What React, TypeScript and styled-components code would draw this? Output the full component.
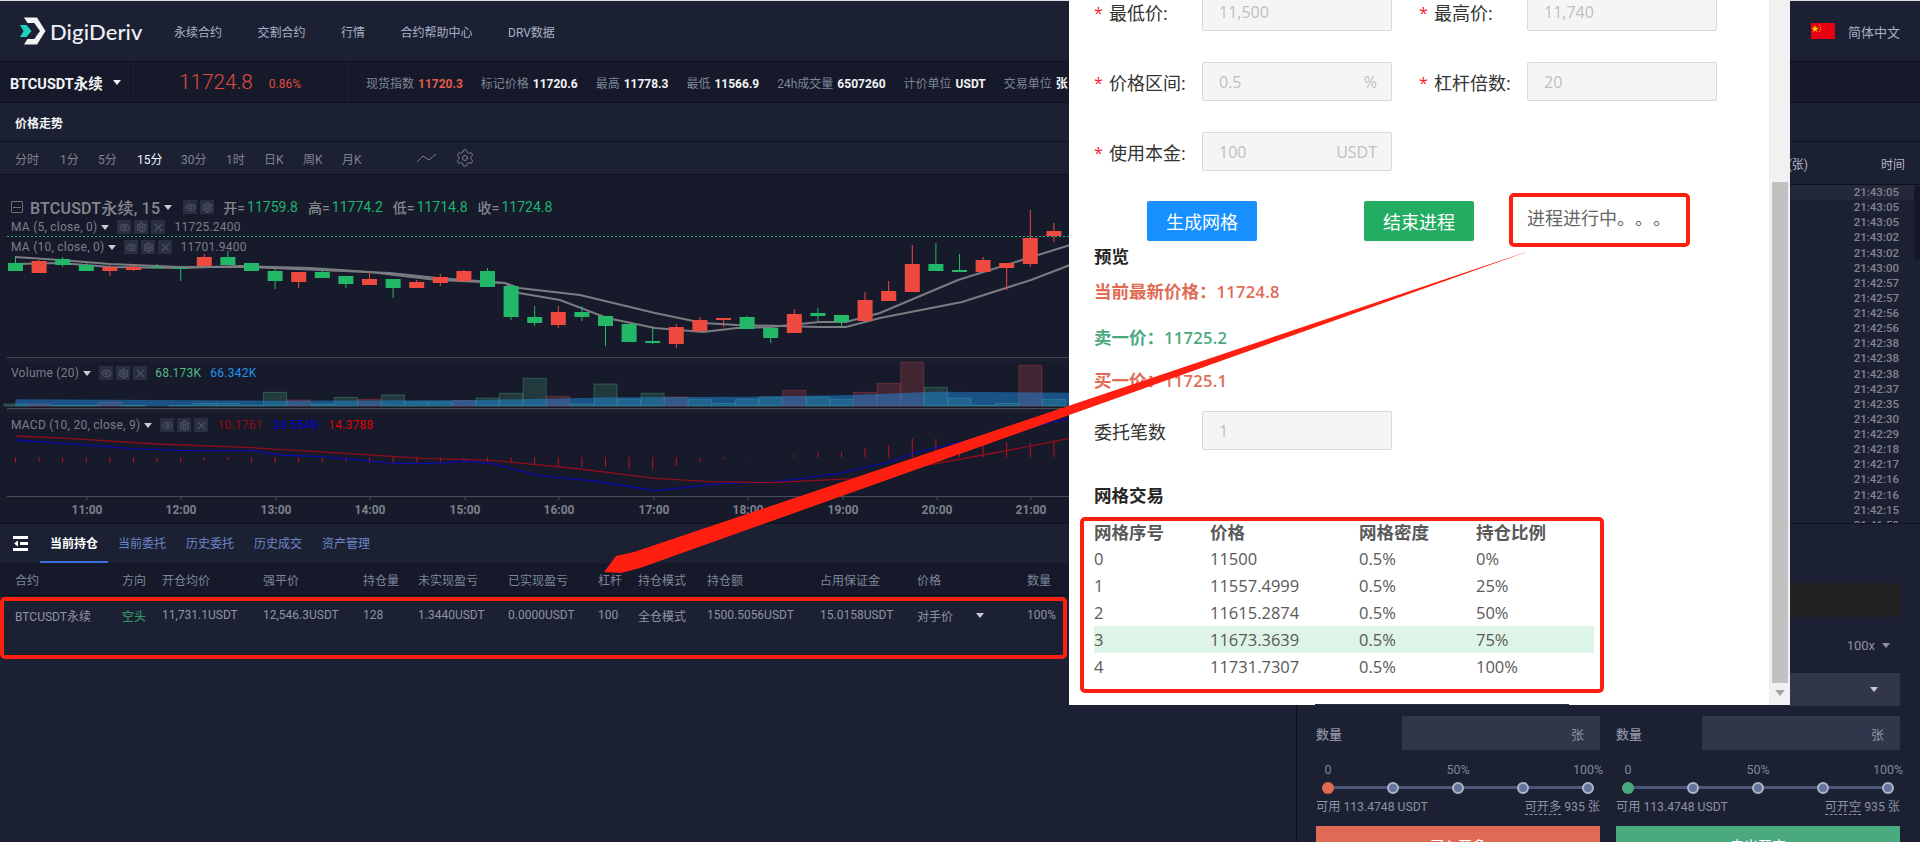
import React from "react";
import styled, { createGlobalStyle } from "styled-components";
import { Eye, Settings, X } from "lucide-react";

const SANS = `"Roboto", "Noto Sans CJK SC", sans-serif`;
const MODAL = `"Open Sans", "Noto Sans CJK SC", sans-serif`;

const Global = createGlobalStyle`
  html, body { margin: 0; padding: 0; background: #1c2033; }
  * { box-sizing: border-box; text-spacing-trim: space-all; }
  #root { width: 1920px; height: 842px; overflow: hidden; }
`;

const Page = styled.div`
  position: relative;
  width: 1920px;
  height: 842px;
  overflow: hidden;
  background: #1c2033;
  font-family: ${SANS};
  font-size: 12px;
  color: #8d92a4;
  display: flex;
  flex-direction: column;
`;

/* ---------- header ---------- */
const Header = styled.header`
  height: 61px;
  flex: none;
  border-top: 1px solid #dcdde0;
  display: flex;
  align-items: center;
  padding: 0 20px;
  background: #1c2033;
`;
const LogoWrap = styled.div`
  display: flex;
  align-items: center;
  gap: 4px;
  width: 154px;
  flex: none;
`;
const LogoText = styled.span`
  font-family: "Lato", sans-serif;
  font-size: 22px;
  font-weight: 500;
  letter-spacing: 0.1px;
  color: #eef0f4;
`;
const Nav = styled.nav`
  display: flex;
  gap: 35.5px;
  flex: 1;
  padding-top: 1px;
`;
const NavItem = styled.span`
  color: #a8b0c6;
  font-size: 12px;
`;
const Lang = styled.div`
  display: flex;
  align-items: center;
  gap: 13px;
  color: #a8b0c6;
  font-size: 13px;
`;

/* ---------- ticker ---------- */
const Ticker = styled.div`
  height: 42px;
  flex: none;
  display: flex;
  align-items: stretch;
  background: #151929;
  border-top: 1px solid #10131f;
  border-bottom: 1px solid #0e111c;
`;
const Symbol = styled.div`
  width: 134px;
  flex: none;
  display: flex;
  align-items: center;
  gap: 10px;
  padding-left: 10px;
  font-size: 14.5px;
  font-weight: 700;
  color: #f2f3f6;
  border-right: 1px solid #1d2134;
`;
const PriceCell = styled.div`
  width: 214px;
  flex: none;
  display: flex;
  align-items: center;
  gap: 16px;
  padding-left: 45px;
  color: #e14b3f;
  border-right: 1px solid #1d2134;
`;
const BigPrice = styled.span`
  font-size: 20.7px;
  font-weight: 300;
`;
const Change = styled.span`
  font-size: 12px;
  padding-top: 4px;
`;
const Stats = styled.div`
  display: flex;
  align-items: center;
  gap: 18px;
  padding-left: 18px;
  white-space: nowrap;
`;
const Stat = styled.span`
  color: #7f8698;
`;
const StatValue = styled.b<{ $red?: boolean }>`
  margin-left: 4px;
  color: ${(p) => (p.$red ? "#e0594c" : "#f2f3f6")};
  font-weight: 700;
`;

/* ---------- body ---------- */
const Body = styled.div`
  flex: 1;
  display: grid;
  grid-template-columns: 1296px 624px;
  min-height: 0;
`;
const Column = styled.div`
  display: flex;
  flex-direction: column;
  min-height: 0;
`;
const TitleBar = styled.div`
  height: 39px;
  flex: none;
  display: flex;
  align-items: center;
  padding-left: 15px;
  font-weight: 700;
  color: #f2f3f6;
  border-bottom: 1px solid #0e111c;
`;
const TimeBar = styled.div`
  height: 33px;
  flex: none;
  display: flex;
  align-items: center;
  padding-left: 15px;
  border-bottom: 1px solid #0e111c;
`;
const TimeTab = styled.span<{ $on?: boolean; $w: number }>`
  width: ${(p) => p.$w}px;
  flex: none;
  color: ${(p) => (p.$on ? "#f2f3f6" : "#80828c")};
`;
const Tools = styled.div`
  display: flex;
  align-items: center;
  gap: 18px;
  margin-left: 36px;
  color: #7f818b;
`;

/* ---------- chart ---------- */
const ChartArea = styled.div`
  height: 348px;
  flex: none;
  display: flex;
  flex-direction: column;
  background: #161a2b;
`;
const Pane = styled.div<{ $h: number }>`
  position: relative;
  height: ${(p) => p.$h}px;
  flex: none;
`;
const Drawing = styled.svg`
  display: block;
  width: 100%;
  height: 100%;
`;
const Legend = styled.div<{ $top: number }>`
  position: absolute;
  left: 11px;
  top: ${(p) => p.$top}px;
  display: flex;
  flex-direction: column;
`;
const LegendRow = styled.div`
  height: 20px;
  display: flex;
  align-items: center;
  color: #7d7f88;
  font-size: 12px;
  letter-spacing: 0.25px;
  white-space: nowrap;
`;
const LegendMain = styled(LegendRow)`
  font-size: 16px;
  letter-spacing: 0.2px;
  font-weight: 500;
  color: #85878f;
`;
const Collapse = styled.span`
  width: 12px;
  height: 12px;
  border: 1px solid #6f717a;
  border-radius: 1px;
  margin-right: 7px;
  display: flex;
  align-items: center;
  justify-content: center;
  &::after { content: ""; width: 8px; height: 1px; background: #6f717a; }
`;
const Caret = styled.span<{ $c?: string; $ml?: number }>`
  width: 0;
  height: 0;
  flex: none;
  border-left: 4px solid transparent;
  border-right: 4px solid transparent;
  border-top: 5px solid ${(p) => p.$c ?? "#c8cad0"};
  margin-left: ${(p) => p.$ml ?? 4}px;
`;
const IconGroup = styled.span<{ $ml: number; $mr: number }>`
  display: flex;
  gap: 3px;
  margin-left: ${(p) => p.$ml}px;
  margin-right: ${(p) => p.$mr}px;
`;
const IconBox = styled.span`
  width: 14px;
  height: 14px;
  display: flex;
  align-items: center;
  justify-content: center;
  background: #2a2f40;
  color: #4e5362;
`;
const Label = styled.span`
  font-size: 14px;
  letter-spacing: 0;
  margin-right: 2px;
`;
const Value = styled.span<{ $c: string; $mr?: number }>`
  color: ${(p) => p.$c};
  margin-right: ${(p) => p.$mr ?? 10}px;
  font-weight: 400;
`;
const MainValue = styled(Value)`
  font-size: 14px;
  letter-spacing: 0;
`;

/* ---------- positions ---------- */
const Tabs = styled.div`
  height: 40px;
  flex: none;
  display: flex;
  align-items: center;
  padding-left: 13px;
  border-top: 1px solid #0e111c;
`;
const Tab = styled.span<{ $on?: boolean }>`
  position: relative;
  height: 39px;
  display: flex;
  align-items: center;
  width: 68px;
  padding-left: 10px;
  color: ${(p) => (p.$on ? "#ffffff" : "#6d86c8")};
  font-weight: ${(p) => (p.$on ? 700 : 400)};
  border-bottom: 2px solid ${(p) => (p.$on ? "#3b6fdc" : "transparent")};
`;
const TabIcon = styled.span`
  width: 27px;
  flex: none;
  display: flex;
  color: #fff;
`;
const grid = `15px 107px 40px 101px 100px 55px 90px 90px 40px 69px 113px 97px 110px 60px`;
const PosHead = styled.div`
  height: 33px;
  flex: none;
  display: grid;
  grid-template-columns: ${grid};
  align-items: center;
  background: #151929;
  border-bottom: 1px solid #0e111c;
  color: #7f8698;
`;
const PosRow = styled.div`
  height: 38px;
  flex: none;
  display: grid;
  grid-template-columns: ${grid};
  align-items: center;
  color: #8f94a4;
`;
const Short = styled.span`
  color: #35a96f;
`;
const PriceType = styled.span`
  display: flex;
  align-items: center;
  gap: 23px;
`;

/* ---------- trades ---------- */
const TradeHead = styled.div`
  height: 43px;
  flex: none;
  display: flex;
  justify-content: flex-end;
  align-items: center;
  gap: 73px;
  padding-right: 15px;
  color: #b4b8c4;
  border-bottom: 1px solid #0e111c;
`;
const TradeList = styled.div`
  position: relative;
  height: 338px;
  flex: none;
  overflow: hidden;
`;
const TradeRow = styled.div<{ $on?: boolean }>`
  height: 15.13px;
  line-height: 15px;
  padding-right: 15px;
  margin-right: 6px;
  text-align: right;
  color: #82848e;
  font-weight: 500;
  font-size: 11.5px;
  background: ${(p) => (p.$on ? "#24283b" : "transparent")};
`;
const ListThumb = styled.span`
  position: absolute;
  right: 0;
  top: 1px;
  width: 6px;
  height: 74px;
  border-radius: 3px;
  background: #141728;
`;

/* ---------- order form ---------- */
const FormPanel = styled.div`
  flex: 1;
  min-height: 0;
  border-left: 1px solid #0e111c;
  border-top: 1px solid #0e111c;
  padding: 59px 20px 0 19px;
  display: flex;
  flex-direction: column;
  overflow: hidden;
`;
const WideField = styled.div<{ $bg: string; $h: number }>`
  width: 110px;
  height: ${(p) => p.$h}px;
  flex: none;
  align-self: flex-end;
  background: ${(p) => p.$bg};
  display: flex;
  align-items: center;
  justify-content: flex-end;
  padding-right: 22px;
`;
const LeverRow = styled.div`
  height: 56px;
  flex: none;
  display: flex;
  align-items: center;
  justify-content: flex-end;
  gap: 7px;
  padding-right: 10px;
  font-size: 13px;
  color: #8d92a4;
`;
const Sides = styled.div`
  display: grid;
  grid-template-columns: 284px 284px;
  gap: 16px;
  margin-top: 10px;
`;
const Side = styled.div`
  display: flex;
  flex-direction: column;
`;
const QtyRow = styled.div`
  height: 34px;
  display: flex;
  align-items: center;
  justify-content: space-between;
  font-weight: 500;
  font-size: 13px;
  color: #8d92a4;
`;
const QtyInput = styled.div`
  width: 198px;
  height: 34px;
  background: #32364a;
  display: flex;
  align-items: center;
  justify-content: flex-end;
  padding-right: 16px;
  font-weight: 400;
`;
const Scale = styled.div`
  height: 15px;
  margin-top: 12px;
  display: flex;
  width: 288px;
  color: #7f8698;
  font-size: 12.5px;
  line-height: 15px;
`;
const ScaleMark = styled.span<{ $w: number; $ml: number }>`
  width: ${(p) => p.$w}px;
  margin-left: ${(p) => p.$ml}px;
  flex: none;
  text-align: center;
`;
const Track = styled.div`
  position: relative;
  height: 12px;
  margin: 5px 12px 0 12px;
  display: flex;
  align-items: center;
  justify-content: space-between;
  &::before {
    content: "";
    position: absolute;
    left: 0;
    right: 0;
    top: 4px;
    height: 3px;
    background: #4d5878;
  }
`;
const Dot = styled.span<{ $c?: string }>`
  position: relative;
  width: 12px;
  height: 12px;
  border-radius: 50%;
  margin: 0 -6px;
  background: ${(p) => p.$c ?? "#66739c"};
  border: ${(p) => (p.$c ? "none" : "2px solid #aeb6cb")};
`;
const Info = styled.div`
  margin-top: 5px;
  height: 16px;
  line-height: 16px;
  font-size: 12.2px;
  display: flex;
  justify-content: space-between;
  color: #8d92a4;
`;
const Dashed = styled.span`
  border-bottom: 1px dashed #8d92a4;
`;
const Action = styled.div<{ $c: string }>`
  margin-top: 11px;
  height: 38px;
  background: ${(p) => p.$c};
  color: #fff;
  font-size: 14px;
  display: flex;
  align-items: center;
  justify-content: center;
`;

/* ---------- modal ---------- */
const Modal = styled.div`
  position: absolute;
  left: 1069px;
  top: 0;
  width: 721px;
  height: 705px;
  background: #fff;
  overflow: hidden;
  font-family: ${MODAL};
  color: #333;
  display: flex;
`;
const ModalBody = styled.div`
  flex: 1;
  padding: 0 0 0 25px;
  margin-top: -8px;
`;
const FormRow = styled.div`
  height: 39px;
  margin-bottom: 31px;
  display: flex;
`;
const FormField = styled.div`
  width: 325px;
  flex: none;
  display: flex;
  align-items: center;
`;
const Star = styled.span`
  width: 15px;
  flex: none;
  color: #f5222d;
  font-size: 16px;
  padding-top: 3px;
`;
const FieldLabel = styled.span`
  width: 93px;
  flex: none;
  font-size: 18px;
  color: #333;
`;
const PlainLabel = styled(FieldLabel)`
  width: 108px;
`;
const Box = styled.div`
  width: 190px;
  height: 39px;
  flex: none;
  display: flex;
  align-items: center;
  justify-content: space-between;
  padding: 0 14px 0 16px;
  background: #f5f5f5;
  border: 1px solid #d9d9d9;
  border-radius: 2px;
  color: #bfbfbf;
  font-size: 16px;
`;
const Buttons = styled.div`
  display: flex;
  align-items: center;
  margin-top: -1px;
  padding-left: 53px;
  height: 40px;
`;
const Btn = styled.div<{ $c: string }>`
  width: 110px;
  height: 40px;
  flex: none;
  display: flex;
  align-items: center;
  justify-content: center;
  border-radius: 2px;
  background: ${(p) => p.$c};
  color: #fff;
  font-size: 18px;
  box-shadow: 0 2px 0 rgba(0, 0, 0, 0.03);
  margin-right: 107px;
`;
const Running = styled.span`
  font-size: 18px;
  color: #666;
  white-space: nowrap;
  margin: -8px 0 0 -54px;
`;
const Heading = styled.div<{ $mt: number }>`
  margin-top: ${(p) => p.$mt}px;
  font-size: 17.5px;
  line-height: 26px;
  font-weight: 700;
  color: #262626;
`;
const Quote = styled.div<{ $c: string; $mt: number }>`
  margin-top: ${(p) => p.$mt}px;
  font-size: 17.5px;
  line-height: 24px;
  font-weight: 700;
  color: ${(p) => p.$c};
`;
const QuoteNum = styled.span`
  font-size: 16.5px;
  font-weight: 600;
  letter-spacing: 0.3px;
`;
const OrderCount = styled.div`
  display: flex;
  align-items: center;
  margin-top: 18px;
`;
const GridTable = styled.div`
  margin-top: 10px;
  width: 500px;
  display: flex;
  flex-direction: column;
`;
const GridRow = styled.div<{ $on?: boolean; $head?: boolean }>`
  height: 27px;
  display: grid;
  grid-template-columns: 116px 149px 117px 118px;
  align-items: center;
  color: #595959;
  font-size: ${(p) => (p.$head ? 17.5 : 16.5)}px;
  font-weight: ${(p) => (p.$head ? 700 : 400)};
  background: ${(p) => (p.$on ? "#def4e7" : "transparent")};
`;
const ScrollTrack = styled.div`
  position: relative;
  width: 21px;
  flex: none;
  height: 705px;
  background: #f1f1f1;
  border-left: 1px solid #eee;
`;
const ScrollThumb = styled.div`
  position: absolute;
  left: 2px;
  right: 2px;
  top: 182px;
  height: 501px;
  background: #c1c1c1;
`;
const ScrollArrow = styled.span`
  position: absolute;
  left: 5px;
  bottom: 9px;
  width: 0;
  height: 0;
  border-left: 5px solid transparent;
  border-right: 5px solid transparent;
  border-top: 6px solid #a3a3a3;
`;
const ModalFoot = styled.span`
  position: absolute;
  left: 246px;
  bottom: 0;
  width: 254px;
  height: 1px;
  background: #2a2d3a;
`;

/* ---------- annotations over the screenshot ---------- */
const RedBox = styled.div<{ $x: number; $y: number; $w: number; $h: number }>`
  position: absolute;
  left: ${(p) => p.$x}px;
  top: ${(p) => p.$y}px;
  width: ${(p) => p.$w}px;
  height: ${(p) => p.$h}px;
  border: 4px solid #ff1f10;
  border-radius: 5px;
`;
const ArrowLayer = styled.svg`
  position: absolute;
  left: 0;
  top: 0;
  width: 1920px;
  height: 842px;
  pointer-events: none;
`;

/* ---------- data ---------- */
type C = [number, number, number, number, number];
// body-top, body-bottom, wick-top, wick-bottom, 1 = red
const candles: C[] = [
  [263, 271, 256, 271, 0], [261, 273, 260, 273, 1], [259, 265, 257, 267, 0], [265, 271, 263, 271, 0],
  [267, 271, 265, 276, 1], [267, 270, 264, 271, 1], [267, 268, 264, 268, 0], [268, 269, 267, 281, 0],
  [257, 266, 254, 266, 1], [257, 265, 251, 265, 0], [263, 271, 263, 271, 0], [271, 281, 269, 289, 0],
  [272, 282, 272, 288, 1], [272, 278, 268, 278, 0], [276, 284, 276, 288, 0], [279, 285, 271, 285, 1],
  [279, 288, 279, 298, 0], [282, 288, 280, 288, 1], [277, 283, 274, 286, 1], [271, 281, 270, 281, 1],
  [271, 287, 268, 287, 0], [286, 317, 286, 320, 0], [317, 323, 306, 326, 0], [312, 325, 306, 328, 1],
  [312, 317, 306, 321, 0], [316, 326, 316, 346, 0], [324, 342, 324, 342, 0], [341, 343, 328, 344, 0],
  [327, 344, 324, 348, 1], [320, 331, 317, 332, 1], [318, 320, 318, 327, 1], [317, 329, 316, 329, 0],
  [328, 338, 328, 343, 0], [314, 333, 309, 333, 1], [313, 316, 308, 321, 0], [315, 322, 315, 327, 0],
  [300, 321, 292, 321, 1], [291, 301, 281, 301, 1], [264, 292, 245, 292, 1], [264, 271, 243, 271, 0],
  [270, 272, 254, 272, 0], [260, 272, 257, 272, 1], [263, 268, 263, 290, 1], [238, 264, 210, 267, 1],
  [231, 236, 223, 242, 1], [222, 240, 214, 244, 1], [226, 250, 220, 256, 0], [240, 262, 232, 268, 0],
];
const cx = (i: number) => 15.5 + 23.6 * i;

const maFast = "15,264 60,263 110,267 181,268 240,266 310,268 370,272 437,280 505,283 519,293 560,300 607,318 655,328 703,332 737,328 771,327 819,322 846,322 880,313 958,280 1070,245 1300,190";
const maSlow = "15,257 60,260 110,264 180,267 250,267 320,270 390,273 437,278 505,283 519,288 580,295 655,313 703,323 737,325 819,327 846,327 880,318 962,302 1031,280 1070,265 1300,210";

const volTops = [372, 372, 376, 376, 366, 376, 380, 376, 370, 370, 376, 337, 360, 372, 352, 358, 345, 366, 366, 362, 354, 340, 295, 349, 372, 312, 358, 340, 351, 358, 370, 358, 351, 331, 351, 358, 337, 310, 247, 322, 354, 376, 370, 256, 358];
const volRed = new Set([1, 4, 12, 15, 19, 23, 28, 33, 36, 37, 38, 43]);
const volY = (v: number) => 280 + v / 3;
const volArea: [number, number][] = [[23, 358], [400, 362], [700, 360], [900, 352], [1100, 350], [1250, 345], [1370, 335], [1567, 338], [1900, 338]];

const macdSignal: [number, number][] = [[23, 468], [100, 475], [230, 492], [370, 503], [480, 517], [620, 535], [720, 541], [850, 567], [960, 595], [1040, 605], [1130, 608], [1250, 596], [1400, 540], [1480, 510], [1567, 475], [1900, 400]];
const macdLine: [number, number][] = [[23, 480], [110, 493], [190, 505], [270, 512], [370, 512], [410, 525], [470, 530], [580, 550], [640, 550], [680, 543], [720, 550], [790, 587], [870, 603], [960, 632], [1060, 610], [1130, 607], [1230, 580], [1300, 548], [1340, 518], [1410, 485], [1480, 455], [1567, 415], [1900, 340]];
const macdTicks = [14, 12, 14, 15, 17, 15, 13, 14, 10, 8, 13, 17, 14, 14, 14, 16, 17, 17, 14, 13, 13, 15, 22, 28, 28, 28, 34, 35, 27, 13, 5, 2, 1, -8, -15, -15, -28, -36, -57, -56, -45, -48, -45, -44, -50];
const zoomPts = (pts: [number, number][]) => pts.map(([x, v]) => `${(x / 1.465).toFixed(1)},${volY(v).toFixed(1)}`).join(" ");

const hours = [[87, "11:00"], [181, "12:00"], [276, "13:00"], [370, "14:00"], [465, "15:00"], [559, "16:00"], [654, "17:00"], [748, "18:00"], [843, "19:00"], [937, "20:00"], [1031, "21:00"]] as const;
const times = ["21:43:05", "21:43:05", "21:43:05", "21:43:02", "21:43:02", "21:43:00", "21:42:57", "21:42:57", "21:42:56", "21:42:56", "21:42:38", "21:42:38", "21:42:38", "21:42:37", "21:42:35", "21:42:30", "21:42:29", "21:42:18", "21:42:17", "21:42:16", "21:42:16", "21:42:15", "21:41:59"];
const headers = ["合约", "方向", "开仓均价", "强平价", "持仓量", "未实现盈亏", "已实现盈亏", "杠杆", "持仓模式", "持仓额", "占用保证金", "价格", "数量"];
const gridRows = [["0", "11500", "0.5%", "0%"], ["1", "11557.4999", "0.5%", "25%"], ["2", "11615.2874", "0.5%", "50%"], ["3", "11673.3639", "0.5%", "75%"], ["4", "11731.7307", "0.5%", "100%"]];
const tf: [string, number, boolean?][] = [["分时", 45], ["1分", 38], ["5分", 39], ["15分", 44, true], ["30分", 45], ["1时", 38], ["日K", 39], ["周K", 39], ["月K", 39]];

const Icons = ({ ml, mr }: { ml: number; mr: number }) => (
  <IconGroup $ml={ml} $mr={mr}>
    <IconBox><Eye size={11} strokeWidth={2.4} /></IconBox>
    <IconBox><Settings size={11} strokeWidth={2.6} /></IconBox>
    <IconBox><X size={13} strokeWidth={2} /></IconBox>
  </IconGroup>
);

const Logo = () => (
  <svg width="26" height="28" viewBox="0 0 26 28" fill="none">
    <path d="M4 0.5h13l8.5 13.5L17 27.5H4l3.5-5.5h6.8L20 14l-5.7-8H7.5z" fill="#f2f3f5" />
    <path d="M0 8h6.5l5 6-5 6H0l3.6-6z" fill="#1fd1bd" />
  </svg>
);

const Flag = () => (
  <svg width="24" height="16" viewBox="0 0 24 16">
    <rect width="24" height="16" fill="#e60012" />
    <path d="M4 2.2l.9 2.6h2.7L5.4 6.4l.8 2.6L4 7.4 1.8 9l.8-2.6L.4 4.8h2.7z" fill="#ffdd00" />
    <circle cx="8.5" cy="2" r=".6" fill="#ffdd00" />
    <circle cx="9.7" cy="4" r=".6" fill="#ffdd00" />
    <circle cx="9.7" cy="6.4" r=".6" fill="#ffdd00" />
    <circle cx="8.5" cy="8.4" r=".6" fill="#ffdd00" />
  </svg>
);

const Slider = ({ c }: { c: string }) => (
  <>
    <Scale>
      <ScaleMark $w={24} $ml={0}>0</ScaleMark>
      <ScaleMark $w={48} $ml={94}>50%</ScaleMark>
      <ScaleMark $w={32} $ml={90}>100%</ScaleMark>
    </Scale>
    <Track>
      <Dot $c={c} />
      <Dot />
      <Dot />
      <Dot />
      <Dot />
    </Track>
  </>
);

export default function App() {
  return (
    <Page>
      <Global />
      <Header>
        <LogoWrap>
          <Logo />
          <LogoText>DigiDeriv</LogoText>
        </LogoWrap>
        <Nav>
          {["永续合约", "交割合约", "行情", "合约帮助中心", "DRV数据"].map((t) => (
            <NavItem key={t}>{t}</NavItem>
          ))}
        </Nav>
        <Lang>
          <Flag />
          <span>简体中文</span>
        </Lang>
      </Header>

      <Ticker>
        <Symbol>
          BTCUSDT永续
          <Caret $c="#f2f3f6" $ml={0} />
        </Symbol>
        <PriceCell>
          <BigPrice>11724.8</BigPrice>
          <Change>0.86%</Change>
        </PriceCell>
        <Stats>
          <Stat>现货指数<StatValue $red>11720.3</StatValue></Stat>
          <Stat>标记价格<StatValue>11720.6</StatValue></Stat>
          <Stat>最高<StatValue>11778.3</StatValue></Stat>
          <Stat>最低<StatValue>11566.9</StatValue></Stat>
          <Stat>24h成交量<StatValue>6507260</StatValue></Stat>
          <Stat>计价单位<StatValue>USDT</StatValue></Stat>
          <Stat>交易单位<StatValue>张</StatValue></Stat>
        </Stats>
      </Ticker>

      <Body>
        <Column>
          <TitleBar>价格走势</TitleBar>
          <TimeBar>
            {tf.map(([t, w, on]) => (
              <TimeTab key={t} $w={w} $on={on}>{t}</TimeTab>
            ))}
            <Tools>
              <svg width="20" height="10" viewBox="0 0 20 10" fill="none" stroke="currentColor">
                <path d="M0 9l6-6 6 4 7-6" />
              </svg>
              <Settings size={20} strokeWidth={1.2} />
            </Tools>
          </TimeBar>

          <ChartArea>
            <Pane $h={182}>
              <Drawing viewBox="0 175 1296 182">
                <line x1="7" x2="1296" y1="236.5" y2="236.5" stroke="#1fb36b" strokeDasharray="2 2" />
                <polyline points={maSlow} fill="none" stroke="#7b7c82" strokeWidth="2" />
                <polyline points={maFast} fill="none" stroke="#7b7c82" strokeWidth="2" />
                {candles.map(([t, b, wt, wb, r], i) => {
                  const c = r ? "#ef4a3f" : "#22b868";
                  return (
                    <g key={i}>
                      <line x1={cx(i)} x2={cx(i)} y1={wt} y2={wb} stroke={c} />
                      <rect x={cx(i) - 7.5} y={t} width="15" height={Math.max(b - t, 1)} fill={c} />
                    </g>
                  );
                })}
              </Drawing>
              <Legend $top={22}>
                <LegendMain>
                  <Collapse />
                  BTCUSDT永续, 15
                  <Caret $ml={4} />
                  <IconGroup $ml={11} $mr={9}>
                    <IconBox><Eye size={11} strokeWidth={2.4} /></IconBox>
                    <IconBox><Settings size={11} strokeWidth={2.6} /></IconBox>
                  </IconGroup>
                  <Label>开=</Label><MainValue $c="#1fb36b" $mr={10}>11759.8</MainValue>
                  <Label>高=</Label><MainValue $c="#1fb36b" $mr={10}>11774.2</MainValue>
                  <Label>低=</Label><MainValue $c="#1fb36b" $mr={10}>11714.8</MainValue>
                  <Label>收=</Label><MainValue $c="#1fb36b" $mr={10}>11724.8</MainValue>
                </LegendMain>
                <LegendRow>
                  MA (5, close, 0)
                  <Caret $ml={4} />
                  <Icons ml={8} mr={9} />
                  11725.2400
                </LegendRow>
                <LegendRow>
                  MA (10, close, 0)
                  <Caret $ml={4} />
                  <Icons ml={8} mr={8} />
                  11701.9400
                </LegendRow>
              </Legend>
            </Pane>

            <Pane $h={52}>
              <Drawing viewBox="0 357 1296 52">
                <line x1="7" x2="1296" y1="357.5" y2="357.5" stroke="#454752" strokeWidth="1" />
                <rect x="7" y="358" width="1289" height="4" fill="#1a1e2e" />
                <line x1="7" x2="1296" y1="408.5" y2="408.5" stroke="#4b4d57" />
                <line x1="7" x2="1296" y1="406" y2="406" stroke="#2a2f3c" />
                {volTops.map((v, i) => {
                  const y = volY(v);
                  const r = volRed.has(i);
                  return (
                    <rect
                      key={i}
                      x={cx(i) - 11.5}
                      y={y}
                      width="23"
                      height={Math.max(406 - y, 0)}
                      fill={r ? "rgba(239,83,80,.2)" : "rgba(83,185,135,.2)"}
                      stroke={r ? "rgba(239,83,80,.3)" : "rgba(83,185,135,.35)"}
                    />
                  );
                })}
                <polygon points={`${zoomPts(volArea)} 1296,406 15,406`} fill="rgba(33,150,243,.45)" />
              </Drawing>
              <Legend $top={6}>
                <LegendRow>
                  Volume (20)
                  <Caret $ml={4} />
                  <Icons ml={8} mr={8} />
                  <Value $c="#53b987" $mr={9}>68.173K</Value>
                  <Value $c="#2196f3">66.342K</Value>
                </LegendRow>
              </Legend>
            </Pane>

            <Pane $h={88}>
              <Drawing viewBox="0 409 1296 88">
                <rect x="7" y="409" width="1289" height="4" fill="#1a1e2e" />
                <line x1="7" x2="1296" y1="496.5" y2="496.5" stroke="#4b4d57" />
                {macdTicks.map((h, i) => (
                  <line
                    key={i}
                    x1={cx(i)}
                    x2={cx(i)}
                    y1={volY(532)}
                    y2={volY(532 + h)}
                    stroke="#c4111a"
                  />
                ))}
                <polyline points={zoomPts(macdLine)} fill="none" stroke="#0b0ba8" strokeWidth="1.3" />
                <polyline points={zoomPts(macdSignal)} fill="none" stroke="#8f0d1c" strokeWidth="1.3" />
              </Drawing>
              <Legend $top={6}>
                <LegendRow>
                  MACD (10, 20, close, 9)
                  <Caret $ml={4} />
                  <Icons ml={8} mr={9} />
                  <Value $c="#9b0808">10.1761</Value>
                  <Value $c="#0000d8">24.5549</Value>
                  <Value $c="#e00000">14.3788</Value>
                </LegendRow>
              </Legend>
            </Pane>

            <Pane $h={26}>
              <Drawing viewBox="0 497 1296 26">
                {hours.map(([x, t]) => (
                  <g key={t}>
                    <line x1={x} x2={x} y1="497" y2="500" stroke="#4b4d57" />
                    <text x={x} y="514" textAnchor="middle" fill="#7e808a" fontSize="12" fontWeight="700" fontFamily="Roboto, sans-serif">
                      {t}
                    </text>
                  </g>
                ))}
              </Drawing>
            </Pane>
          </ChartArea>

          <Tabs>
            <TabIcon>
              <svg width="15" height="15" viewBox="0 0 15 15" fill="#fff">
                <rect width="15" height="3" />
                <rect y="12" width="15" height="3" />
                <rect x="7" y="6" width="8" height="3" />
                <path d="M5 4.5v6L1 7.5z" />
              </svg>
            </TabIcon>
            <Tab $on>当前持仓</Tab>
            <Tab>当前委托</Tab>
            <Tab>历史委托</Tab>
            <Tab>历史成交</Tab>
            <Tab>资产管理</Tab>
          </Tabs>
          <PosHead>
            <span />
            {headers.map((h) => (
              <span key={h}>{h}</span>
            ))}
          </PosHead>
          <PosRow>
            <span />
            <span>BTCUSDT永续</span>
            <Short>空头</Short>
            <span>11,731.1USDT</span>
            <span>12,546.3USDT</span>
            <span>128</span>
            <span>1.3440USDT</span>
            <span>0.0000USDT</span>
            <span>100</span>
            <span>全仓模式</span>
            <span>1500.5056USDT</span>
            <span>15.0158USDT</span>
            <PriceType>对手价<Caret $c="#c8cad0" $ml={0} /></PriceType>
            <span>100%</span>
          </PosRow>
        </Column>

        <Column>
          <TitleBar />
          <TradeHead>
            <span>数量(张)</span>
            <span>时间</span>
          </TradeHead>
          <TradeList>
            {times.map((t, i) => (
              <TradeRow key={i} $on={i === 0}>{t}</TradeRow>
            ))}
            <ListThumb />
          </TradeList>
          <FormPanel>
            <WideField $bg="#222222" $h={34} />
            <LeverRow>100x<Caret $c="#8d92a4" $ml={0} /></LeverRow>
            <WideField $bg="#32364a" $h={33}><Caret $c="#c8cad0" $ml={0} /></WideField>
            <Sides>
              <Side>
                <QtyRow>数量<QtyInput>张</QtyInput></QtyRow>
                <Slider c="#e06b55" />
                <Info>
                  <span>可用 113.4748 USDT</span>
                  <span><Dashed>可开多</Dashed> 935 张</span>
                </Info>
                <Action $c="#e06b55">买入开多</Action>
              </Side>
              <Side>
                <QtyRow>数量<QtyInput>张</QtyInput></QtyRow>
                <Slider c="#4aa97f" />
                <Info>
                  <span>可用 113.4748 USDT</span>
                  <span><Dashed>可开空</Dashed> 935 张</span>
                </Info>
                <Action $c="#4aa97f">卖出开空</Action>
              </Side>
            </Sides>
          </FormPanel>
        </Column>
      </Body>

      <Modal>
        <ModalBody>
          <FormRow>
            <FormField><Star>*</Star><FieldLabel>最低价:</FieldLabel><Box>11,500</Box></FormField>
            <FormField><Star>*</Star><FieldLabel>最高价:</FieldLabel><Box>11,740</Box></FormField>
          </FormRow>
          <FormRow>
            <FormField><Star>*</Star><FieldLabel>价格区间:</FieldLabel><Box>0.5<span>%</span></Box></FormField>
            <FormField><Star>*</Star><FieldLabel>杠杆倍数:</FieldLabel><Box>20</Box></FormField>
          </FormRow>
          <FormRow>
            <FormField><Star>*</Star><FieldLabel>使用本金:</FieldLabel><Box>100<span>USDT</span></Box></FormField>
          </FormRow>
          <Buttons>
            <Btn $c="#1890ff">生成网格</Btn>
            <Btn $c="#23ad62">结束进程</Btn>
            <Running>进程进行中。。。</Running>
          </Buttons>
          <Heading $mt={2}>预览</Heading>
          <Quote $c="#e06b55" $mt={10}>当前最新价格：<QuoteNum>11724.8</QuoteNum></Quote>
          <Quote $c="#4aa97f" $mt={21}>卖一价：<QuoteNum>11725.2</QuoteNum></Quote>
          <Quote $c="#e06b55" $mt={18}>买一价：<QuoteNum>11725.1</QuoteNum></Quote>
          <OrderCount>
            <PlainLabel>委托笔数</PlainLabel>
            <Box>1</Box>
          </OrderCount>
          <Heading $mt={32}>网格交易</Heading>
          <GridTable>
            <GridRow $head>
              <span>网格序号</span>
              <span>价格</span>
              <span>网格密度</span>
              <span>持仓比例</span>
            </GridRow>
            {gridRows.map((r, i) => (
              <GridRow key={r[0]} $on={i === 3}>
                {r.map((c, j) => (
                  <span key={j}>{c}</span>
                ))}
              </GridRow>
            ))}
          </GridTable>
        </ModalBody>
        <ScrollTrack>
          <ScrollThumb />
          <ScrollArrow />
        </ScrollTrack>
        <ModalFoot />
      </Modal>

      <RedBox $x={1509} $y={193} $w={181} $h={54} />
      <RedBox $x={1080} $y={517} $w={524} $h={176} />
      <RedBox $x={0} $y={597} $w={1067} $h={62} />
      <ArrowLayer viewBox="0 0 1920 842">
        <path d="M1532 250 L634 552 L616 556 L604 572 L621 573 L640 568 Z" fill="#ff1f10" />
      </ArrowLayer>
    </Page>
  );
}
